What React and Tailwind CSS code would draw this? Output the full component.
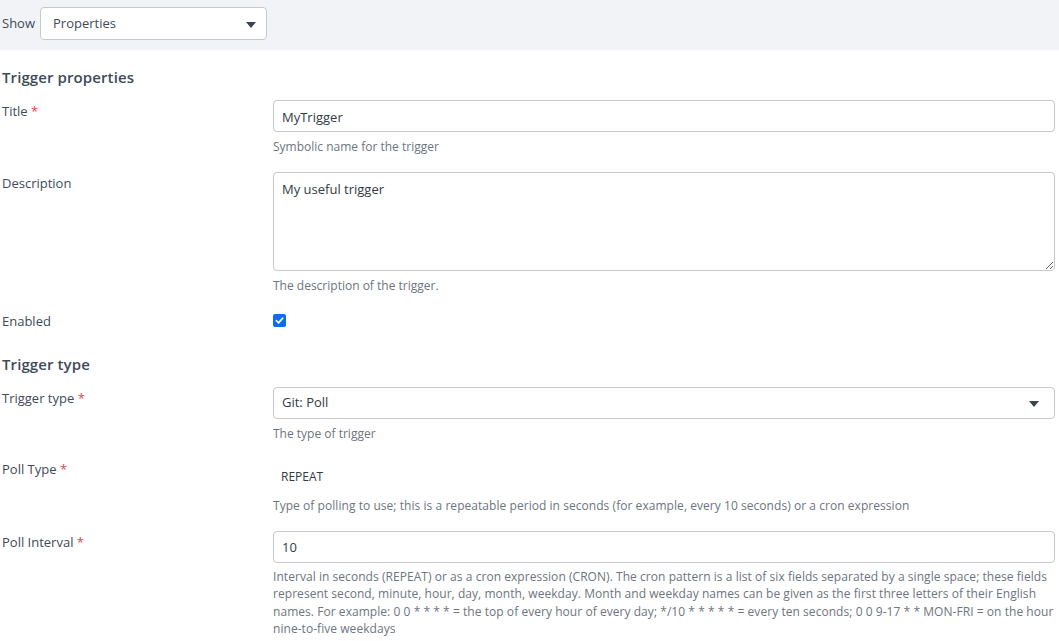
import React from "react";

const Caret = ({ className = "" }) => (
  <svg width="10" height="6" viewBox="0 0 10 6" className={className}>
    <path d="M0 0 L10 0 L5 6 Z" fill="#3d4451" />
  </svg>
);

const Req = () => <span className="text-[#e0474c]"> *</span>;

const Help = ({ children, className = "" }) => (
  <div className={"text-[12px] leading-4 text-[#6c7580] " + className}>{children}</div>
);

const Row = ({ label, required, children, className = "" }) => (
  <div className={"flex " + className}>
    <div className="w-[271px] shrink-0 pt-px text-[13px] leading-5 text-[#3f4a59]">
      {label}
      {required && <Req />}
    </div>
    <div className="flex-1 mr-[4px]">{children}</div>
  </div>
);

const inputCls =
  "w-full h-[32px] rounded-[4px] border border-[#c5cad1] bg-white px-[8px] text-[13px] text-[#333a44] outline-none";

export default function App() {
  return (
    <div className="min-h-screen bg-white font-['Open_Sans',sans-serif] text-[#3f4a59]">
      <div className="h-[50px] bg-[#f2f3f7] flex items-center pl-[2px] pb-[3px]">
        <span className="text-[13px] mr-[5px]">Show</span>
        <div className="w-[227px] h-[33px] rounded-[4px] border border-[#c5cad1] bg-white flex items-center justify-between pl-[12px] pr-[10px] text-[13px] text-[#3f4a59]">
          <span>Properties</span>
          <Caret className="mt-[2px]" />
        </div>
      </div>

      <div className="pl-[2px]">
        <h2 className="mt-[17px] text-[15px] leading-5 font-semibold tracking-[0.1px]">Trigger properties</h2>

        <Row label="Title" required className="mt-[13px]">
          <input className={inputCls + " pt-px"} defaultValue="MyTrigger" />
          <Help className="mt-[7px]">Symbolic name for the trigger</Help>
        </Row>

        <Row label="Description" className="mt-[17px]">
          <textarea
            className="block w-full h-[99px] rounded-[4px] border border-[#c5cad1] bg-white px-[8px] py-[6px] text-[13px] leading-5 text-[#333a44] outline-none"
            defaultValue="My useful trigger"
          />
          <Help className="mt-[7px]">The description of the trigger.</Help>
        </Row>

        <Row label="Enabled" className="mt-[16px]">
          <div className="h-[20px] flex items-center">
            <span className="w-[13px] h-[13px] rounded-[2px] bg-[#0b6cf2] flex items-center justify-center">
              <svg width="9" height="9" viewBox="0 0 10 10">
                <path d="M1.5 5.2 L4 7.6 L8.6 2.4" stroke="white" strokeWidth="1.8" fill="none" strokeLinecap="round" strokeLinejoin="round" />
              </svg>
            </span>
          </div>
        </Row>

        <h2 className="mt-[23px] text-[15px] leading-5 font-semibold tracking-[0.1px]">Trigger type</h2>

        <Row label="Trigger type" required className="mt-[13px]">
          <div className="h-[32px] rounded-[4px] border border-[#c5cad1] bg-white flex items-center justify-between pl-[8px] pr-[15px] text-[13px] text-[#333a44]">
            <span>Git: Poll</span>
            <Caret className="mt-[2px]" />
          </div>
          <Help className="mt-[7px]">The type of trigger</Help>
        </Row>

        <Row label="Poll Type" required className="mt-[16px]">
          <div className="pt-[11px] pl-[8px] text-[12px] leading-4 text-[#333a44]">REPEAT</div>
          <Help className="mt-[13px] tracking-[0.05px]">
            Type of polling to use; this is a repeatable period in seconds (for example, every 10 seconds) or a cron expression
          </Help>
        </Row>

        <Row label="Poll Interval" required className="mt-[17px]">
          <input className={inputCls} defaultValue="10" />
          <Help className="mt-[5px] !leading-[17.3px] tracking-[0.05px]">
            Interval in seconds (REPEAT) or as a cron expression (CRON). The cron pattern is a list of six fields separated by a single space; these fields represent second, minute, hour, day, month, weekday. Month and weekday names can be given as the first three letters of their English names. For example: 0 0 * * * * = the top of every hour of every day; */10 * * * * * = every ten seconds; 0 0 9-17 * * MON-FRI = on the hour nine-to-five weekdays
          </Help>
        </Row>
      </div>
    </div>
  );
}
